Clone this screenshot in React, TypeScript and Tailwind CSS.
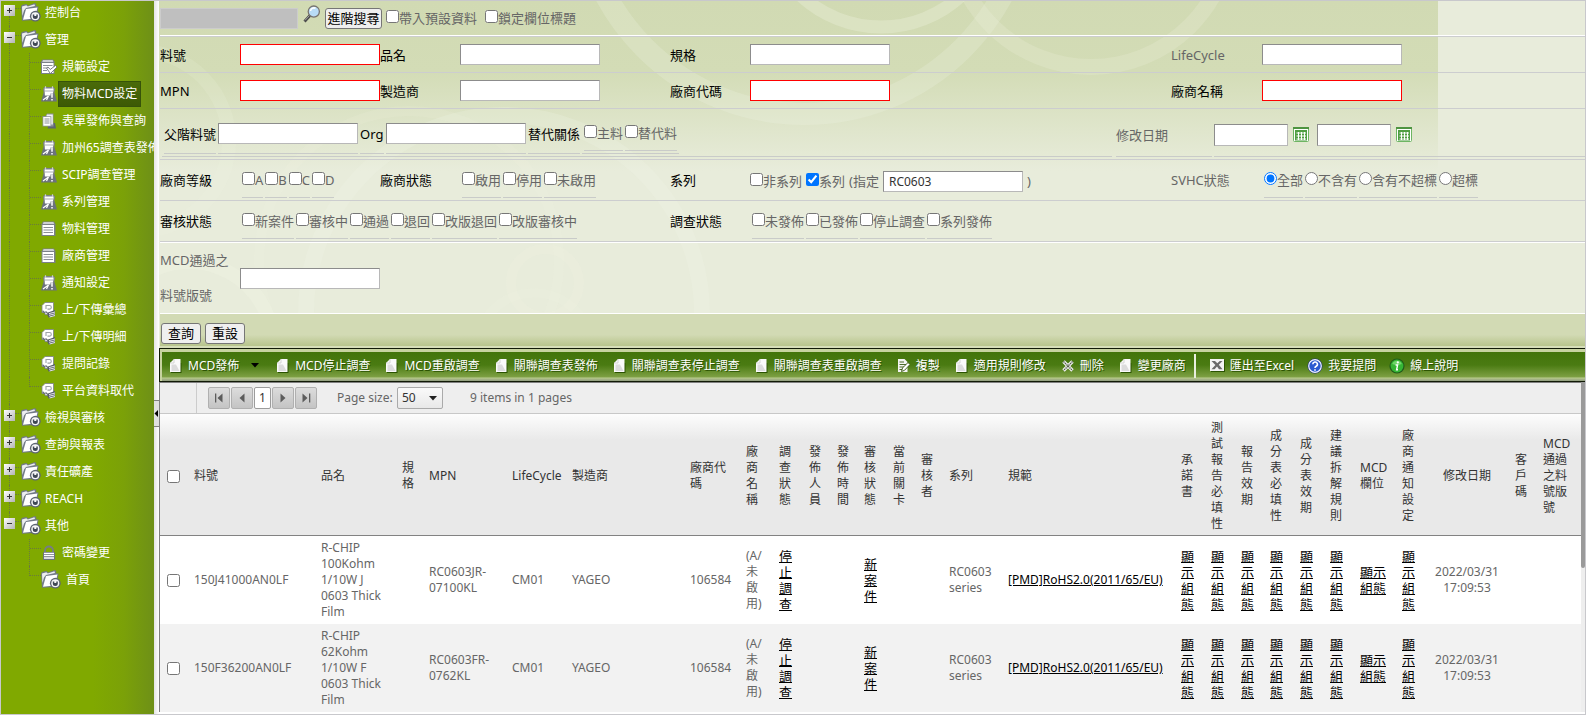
import type { ReactNode } from 'react';

/* ---------- icons ---------- */

function FolderIcon() {
    return (
        <svg width="20" height="19" viewBox="0 0 20 19" className="shrink-0">
            <path d="M0 3 L1.5 1.8 L5.5 1 L7 2.4 L14 0 L15.5 1.6 L15 3.2 L17.5 3.6 L17 7 L14 17 L1 17.8 Z" fill="#727a86" />
            <path d="M1 3.5 L5.3 2.2 L6.8 3.6 L13.4 1.2 L14 3 L5 5 L3 7.5 L1.4 13 Z" fill="#eceef0" />
            <path d="M5 6 L16.5 4.4 L13.5 15.5 L2 16.8 Z" fill="#ffffff" />
            <circle cx="14.3" cy="13.2" r="5.4" fill="#5d6572" />
            <circle cx="14.3" cy="13.2" r="4" fill="#f6f7f8" />
            <path d="M11.8 11.6 h1.5 v1.4 h2 v-1.4 h1.5 v1.8 a2.5 2.5 0 0 1 -5 0 z" fill="#3f4755" />
        </svg>
    );
}

function SheetIcon() {
    return (
        <svg width="16" height="16" viewBox="0 0 16 16" className="shrink-0">
            <path d="M0.5 3 L2 0.5 H13 L14.5 3 V15 H0.5 Z" fill="#7b8088" />
            <path d="M2.6 1.3 H12.4 L13.2 2.8 H1.8 Z" fill="#e8eaec" />
            <rect x="1.5" y="4" width="11.5" height="10" fill="#ffffff" />
            <path d="M2.5 6.5 H12 M2.5 9 H12 M2.5 11.5 H12" stroke="#8a8f96" />
        </svg>
    );
}

function CheckSheetIcon() {
    return (
        <svg width="16" height="16" viewBox="0 0 16 16" className="shrink-0">
            <path d="M0 2.5 L1.5 0.5 H12 L13.5 2.5 V15 H0 Z" fill="#7b8088" />
            <path d="M2 1.3 H11.6 L12.4 2.7 H1.2 Z" fill="#e8eaec" />
            <rect x="1" y="4" width="11.5" height="10" fill="#ffffff" />
            <path d="M2 6.5 H11.5 M2 9 H7 M2 11.5 H6" stroke="#8a8f96" />
            <path d="M5.5 9 L7 8 L9.2 10.5 L14.5 6.5 L16 8 L9.4 14.6 Z" fill="#ffffff" stroke="#6a7078" strokeWidth="0.9" />
        </svg>
    );
}

function AlertIcon() {
    return (
        <svg width="16" height="16" viewBox="0 0 16 16" className="shrink-0">
            <path d="M2.5 7 H13.5 L16 15.5 H0 Z" fill="#6c727d" />
            <path d="M2 2.5 L3.5 1 H12.5 L14 2.5 L13 9.5 H3 Z" fill="#7b8088" />
            <path d="M4.5 0.3 V2.5 M11.5 0.3 V2.5" stroke="#c9cccf" strokeWidth="1.2" />
            <path d="M3.5 2.5 H12.5 V4 L11.5 9.5 H4 Z" fill="#ffffff" />
            <path d="M4 5 H12" stroke="#a8adb3" />
            <path d="M2 14 L7.5 10 L5.5 14" stroke="#ffffff" strokeWidth="1.2" fill="none" />
            <path d="M11 7.5 V11.8 M11 13 V14.6" stroke="#6c727d" strokeWidth="3" />
            <path d="M11 7.5 V11.8 M11 13 V14.6" stroke="#ffffff" strokeWidth="1.5" />
        </svg>
    );
}

function StackIcon() {
    return (
        <svg width="16" height="16" viewBox="0 0 16 16" className="shrink-0">
            <path d="M8 10 L14 10 L15 15.5 H6.5 Z" fill="#5d6470" />
            <path d="M1.5 3 H4.5 L6 0.5 H12.5 V13.5 H1.5 Z" fill="#8c9198" />
            <path d="M2.3 4 H9.5 V12.7 H2.3 Z" fill="#ffffff" />
            <path d="M6 1.4 H11.8 V11.5 H10.3 V3.2 H5.4 Z" fill="#f2f3f4" />
            <path d="M3.5 6 H8.5 M3.5 8 H8.5 M3.5 10 H8.5" stroke="#8a8f96" />
        </svg>
    );
}

function TransferIcon() {
    return (
        <svg width="16" height="16" viewBox="0 0 16 16" className="shrink-0">
            <path d="M1 3.5 L4 0.5 H12.5 V12.5 H4 V10.5 H1 Z" fill="#ffffff" stroke="#7b8088" strokeWidth="0.8" />
            <path d="M5 7 V3.5 h3.5 a1.8 1.8 0 0 1 0 3.6 h-2" stroke="#9da2a8" strokeWidth="1.1" fill="none" />
            <path d="M1.5 8.8 L4 11 M4.5 9.5 L8 12.5" stroke="#6c727d" strokeWidth="1.4" fill="none" />
            <path d="M7 10.5 L14 8 V14 L8 15.8 L6.5 13.5 Z" fill="#565d68" />
            <path d="M8 11.6 L14 10 M8 13.3 L14 11.8 M8.5 15 L14 13.5" stroke="#f2f3f4" strokeWidth="0.9" />
        </svg>
    );
}

function LockIcon() {
    return (
        <svg width="16" height="16" viewBox="0 0 16 16" className="shrink-0">
            <path d="M4 8 V5.5 a4 4 0 0 1 8 0 V8" stroke="#767c86" strokeWidth="1.8" fill="none" />
            <rect x="2" y="7" width="12" height="8" rx="1" fill="#6c727d" />
            <path d="M3 8.5 H13 M3 10.7 H13 M3 13 H13" stroke="#ffffff" strokeWidth="1.3" />
        </svg>
    );
}

function DocIcon() {
    return (
        <svg width="12" height="14" viewBox="0 0 12 14" className="shrink-0">
            <path d="M1 4 H11.5 V14 H1 Z" fill="#2c5402" />
            <path d="M0 4 L4 0 H10.5 V13 H0 Z" fill="#fafafa" />
            <path d="M1.5 5.5 H6 L9.5 12 H1.5 Z" fill="#dcdcdc" />
            <path d="M4 0 V4 H0" stroke="#cccccc" strokeWidth="0.8" fill="none" />
        </svg>
    );
}

function CopyIcon() {
    return (
        <svg width="12" height="14" viewBox="0 0 12 14" className="shrink-0">
            <path d="M0 0 H6.5 L9.5 3 V13 H0 Z" fill="#f4f4f4" />
            <path d="M1.5 3 H6 M1.5 5.5 H8 M1.5 8 H6 M1.5 10.5 H4" stroke="#4c6a28" />
            <path d="M3.5 12.5 L4.5 9 L10 3.5 L12 5.5 L6.5 11.3 Z" fill="#ffffff" stroke="#35520f" strokeWidth="0.9" />
        </svg>
    );
}

function CrossIcon() {
    return (
        <svg width="12" height="12" viewBox="0 0 12 12" className="shrink-0">
            <path d="M1.5 1.5 L10.5 10.5 M10.5 1.5 L1.5 10.5" stroke="#eeeeee" strokeWidth="3.4" />
            <path d="M1.5 1.5 L10.5 10.5 M10.5 1.5 L1.5 10.5" stroke="#55604a" strokeWidth="1.3" strokeDasharray="1.4 0.7" />
        </svg>
    );
}

function ExcelIcon() {
    return (
        <svg width="15" height="13" viewBox="0 0 15 13" className="shrink-0">
            <rect x="1" y="1" width="14" height="12" fill="#2c5402" />
            <rect x="0" y="0" width="14" height="12" fill="#f4f4f4" />
            <path d="M1.5 2 H5 L7.3 4.3 L9.8 2 H12.5 L8.8 5.8 L12.5 10.2 H9 L7 7.6 L4.6 10.2 H1.5 L5.4 6 Z" fill="#6a6a6a" />
        </svg>
    );
}

function HelpIcon() {
    return (
        <svg width="16" height="16" viewBox="0 0 16 16" className="shrink-0">
            <circle cx="8" cy="8" r="7.5" fill="#1d2f73" />
            <circle cx="8" cy="8" r="6.3" fill="#2b5bd0" stroke="#f0f4ff" strokeWidth="1.2" />
            <path d="M5.8 6.3 a2.3 2.3 0 1 1 3.4 2 q-1.2 0.7 -1.2 1.6 M8 11.2 v1.5" stroke="#ffffff" strokeWidth="1.6" fill="none" />
        </svg>
    );
}

function InfoIcon() {
    return (
        <svg width="16" height="16" viewBox="0 0 16 16" className="shrink-0">
            <circle cx="8" cy="8" r="7.6" fill="#225c1a" />
            <circle cx="8" cy="8" r="6.4" fill="#35b535" />
            <path d="M3.2 6 a5.2 5.2 0 0 1 9.6 0 q-4.8 2 -9.6 0" fill="#6fd56b" />
            <path d="M6.6 7 H8.6 L7.6 11.8 H9" stroke="#ffffff" strokeWidth="1.4" fill="none" />
            <circle cx="8.8" cy="4.4" r="1.1" fill="#ffffff" />
        </svg>
    );
}

function SearchIcon() {
    return (
        <svg width="18" height="18" viewBox="0 0 18 18" className="shrink-0">
            <path d="M1.5 16.5 L7 10.5" stroke="#4a4a4a" strokeWidth="2.8" />
            <path d="M2 15.3 L6.5 10.5" stroke="#bdbdbd" strokeWidth="0.8" />
            <circle cx="10.8" cy="6.6" r="5.6" fill="#b9dcf6" stroke="#77736f" strokeWidth="1.3" />
            <path d="M7.5 6 a3.6 3.6 0 0 1 5 -2.8" stroke="#ffffff" strokeWidth="1.6" fill="none" />
        </svg>
    );
}

function CalendarIcon() {
    return (
        <svg width="16" height="16" viewBox="0 0 16 16" className="shrink-0">
            <rect x="0.5" y="0.5" width="15" height="14" rx="1" fill="#ffffff" stroke="#6db562" />
            <rect x="0" y="0" width="16" height="2" fill="#4e9441" />
            <rect x="2" y="3" width="12" height="10.5" fill="#4f9e42" />
            <path d="M3.5 6 H13 M3.5 9 H13 M3.5 12 H13 M5.5 5 V13 M8.5 5 V13 M11.5 5 V13" stroke="#ffffff" />
        </svg>
    );
}

function Swirls() {
    return (
        <svg width="1278" height="346" viewBox="0 0 1278 346" fill="none" stroke="#f3f6e6">
            <circle cx="722" cy="-92" r="118" strokeWidth="13" opacity="0.3" />
            <circle cx="645" cy="-112" r="225" strokeWidth="22" opacity="0.22" />
            <circle cx="932" cy="-74" r="140" strokeWidth="16" opacity="0.2" />
            <circle cx="345" cy="312" r="198" strokeWidth="16" opacity="0.22" />
            <circle cx="250" cy="260" r="150" strokeWidth="10" opacity="0.12" />
            <circle cx="386" cy="282" r="34" strokeWidth="10" opacity="0.18" />
            <circle cx="375" cy="350" r="58" strokeWidth="9" opacity="0.15" />
            <circle cx="-20" cy="140" r="90" strokeWidth="14" opacity="0.15" />
            <circle cx="30" cy="345" r="84" strokeWidth="14" opacity="0.3" />
        </svg>
    );
}

/* ---------- sidebar ---------- */

type TreeNode = { label: string; open?: boolean; children?: { label: string; icon: ReactNode; active?: boolean }[] };

const tree: TreeNode[] = [
    { label: '控制台' },
    {
        label: '管理',
        open: true,
        children: [
            { label: '規範設定', icon: <CheckSheetIcon /> },
            { label: '物料MCD設定', icon: <AlertIcon />, active: true },
            { label: '表單發佈與查詢', icon: <StackIcon /> },
            { label: '加州65調查表發佈', icon: <AlertIcon /> },
            { label: 'SCIP調查管理', icon: <AlertIcon /> },
            { label: '系列管理', icon: <AlertIcon /> },
            { label: '物料管理', icon: <SheetIcon /> },
            { label: '廠商管理', icon: <SheetIcon /> },
            { label: '通知設定', icon: <AlertIcon /> },
            { label: '上/下傳彙總', icon: <TransferIcon /> },
            { label: '上/下傳明細', icon: <TransferIcon /> },
            { label: '提問記錄', icon: <TransferIcon /> },
            { label: '平台資料取代', icon: <TransferIcon /> },
        ],
    },
    { label: '檢視與審核' },
    { label: '查詢與報表' },
    { label: '責任礦產' },
    { label: 'REACH' },
    {
        label: '其他',
        open: true,
        children: [
            { label: '密碼變更', icon: <LockIcon /> },
            { label: '首頁', icon: <FolderIcon /> },
        ],
    },
];

function Sidebar() {
    return (
        <nav className="w-[153px] shrink-0 overflow-hidden bg-[linear-gradient(to_right,#80a900_60%,#7ba108_80%,#6e9017_100%)] text-xs leading-4 text-white">
            <ul className="-mt-[2px]">
                {tree.map((node, i) => {
                    const last = i === tree.length - 1;
                    return (
                        <li key={node.label}>
                            <div className="flex h-[27px] items-center pl-[3px]">
                                <span className="flex h-full w-[11px] flex-col items-center">
                                    <span className={i === 0 ? 'h-[6px]' : 'h-[6px] border-l border-dotted border-[#6b7a3c]'} />
                                    <button
                                        aria-label={node.open ? '收合' : '展開'}
                                        className="flex size-[11px] items-center justify-center bg-linear-to-br from-white to-[#b4b4b4]"
                                    >
                                        <svg width="7" height="7" viewBox="0 0 7 7" stroke="#333333">
                                            <path d={node.open ? 'M1 3.5 H6' : 'M1 3.5 H6 M3.5 1 V6'} />
                                        </svg>
                                    </button>
                                    <span className={last ? 'flex-1' : 'flex-1 border-l border-dotted border-[#6b7a3c]'} />
                                </span>
                                <span className="mb-2 w-[6px] border-t border-dotted border-[#6b7a3c]" />
                                <FolderIcon />
                                <a href="#" className="ml-1 whitespace-nowrap">{node.label}</a>
                            </div>
                            {node.children && (
                                <ul>
                                    {node.children.map((child, j) => (
                                        <li key={child.label} className="flex h-[27px] items-center pl-2">
                                            <span
                                                className={
                                                    last ? 'h-full w-5 shrink-0' : 'h-full w-5 shrink-0 border-l border-dotted border-[#6b7a3c]'
                                                }
                                            />
                                            <span
                                                className={
                                                    j === node.children!.length - 1
                                                        ? 'h-[10px] self-start border-l border-dotted border-[#6b7a3c]'
                                                        : 'h-full border-l border-dotted border-[#6b7a3c]'
                                                }
                                            />
                                            <span className="mb-2 w-[11px] shrink-0 border-t border-dotted border-[#6b7a3c]" />
                                            {child.icon}
                                            <a
                                                href="#"
                                                className={
                                                    child.active
                                                        ? 'ml-px border border-[#37530a] bg-linear-to-b from-[#4a6a0a] to-[#3d5a05] px-[3px] py-1 whitespace-nowrap'
                                                        : 'ml-[5px] whitespace-nowrap'
                                                }
                                            >
                                                {child.label}
                                            </a>
                                        </li>
                                    ))}
                                </ul>
                            )}
                        </li>
                    );
                })}
            </ul>
        </nav>
    );
}

/* ---------- search form ---------- */

function TextBox({ label, required, value }: { label: string; required?: boolean; value?: string }) {
    return (
        <input
            type="text"
            aria-label={label}
            defaultValue={value}
            className={
                required
                    ? 'h-[21px] w-[140px] border border-[#ff0000] bg-white px-1'
                    : 'h-[21px] w-[140px] border border-t-[#8c8c8c] border-r-[#b8b8b8] border-b-[#b8b8b8] border-l-[#8c8c8c] bg-white px-[5px] text-xs text-[#333333]'
            }
        />
    );
}

function DateBox({ label }: { label: string }) {
    return (
        <>
            <input
                type="text"
                aria-label={label}
                className="h-[22px] w-[74px] border border-t-[#8c8c8c] border-r-[#b8b8b8] border-b-[#b8b8b8] border-l-[#8c8c8c] bg-white px-1"
            />
            <button type="button" aria-label={label + '日曆'} className="mr-2 ml-[5px]">
                <CalendarIcon />
            </button>
        </>
    );
}

function Options({ items, type = 'checkbox', name, checked }: { items: string[]; type?: 'checkbox' | 'radio'; name: string; checked?: string }) {
    return (
        <div className="mb-[2px] flex gap-[2px] self-end pl-[2px]">
            {items.map((item) => (
                <label key={item} className="flex h-[26px] items-start border-b border-[#c9cbc9] leading-4 whitespace-nowrap">
                    <input type={type} name={name} defaultChecked={item === checked} className="size-[13px] shrink-0" />
                    {item}
                </label>
            ))}
        </div>
    );
}

function FormRow({ children, tall }: { children: ReactNode; tall?: boolean }) {
    return (
        <div
            className={
                tall
                    ? 'grid h-[41px] grid-cols-[80px_140px_80px_210px_80px_1fr_91px_323px] items-center border-b border-[#cccdcf]'
                    : 'grid h-9 grid-cols-[80px_140px_80px_210px_80px_1fr_91px_323px] items-center border-b border-[#cccdcf]'
            }
        >
            {children}
        </div>
    );
}

function SearchForm() {
    return (
        <form className="relative bg-[#e8ecdb] pl-px text-[13px] leading-4 text-[#666666]">
            <div className="absolute inset-y-0 left-0 w-full max-w-[1279px] overflow-hidden bg-[linear-gradient(to_bottom,#d1dab3_0px,#d3dcb6_70px,#e8ecdb_170px)]">
                <Swirls />
            </div>
            <div className="relative">
                <div className="flex h-[35px] items-center border-b border-white">
                    <input type="text" disabled aria-label="範本" className="h-[21px] w-[138px] border border-[#cccccc] bg-[#bfbfbf]" />
                    <button type="button" aria-label="搜尋" className="mr-1 mb-2 ml-[5px]">
                        <SearchIcon />
                    </button>
                    <button type="button" className="h-[21px] w-[57px] rounded-[3px] border border-[#767676] bg-[#efefef] text-black">
                        進階搜尋
                    </button>
                    <label className="ml-1 flex items-center">
                        <input type="checkbox" className="mb-1 size-[13px]" />
                        帶入預設資料
                    </label>
                    <label className="ml-2 flex items-center">
                        <input type="checkbox" className="mb-1 size-[13px]" />
                        鎖定欄位標題
                    </label>
                </div>
                <div className="border-t border-[#cccdcf]">
                    <FormRow>
                        <span className="text-black">料號</span>
                        <TextBox label="料號" required />
                        <span className="text-black">品名</span>
                        <TextBox label="品名" />
                        <span className="text-black">規格</span>
                        <TextBox label="規格" />
                        <span>LifeCycle</span>
                        <TextBox label="LifeCycle" />
                    </FormRow>
                    <FormRow>
                        <span className="text-black">MPN</span>
                        <TextBox label="MPN" required />
                        <span className="text-black">製造商</span>
                        <TextBox label="製造商" />
                        <span className="text-black">廠商代碼</span>
                        <TextBox label="廠商代碼" required />
                        <span className="text-black">廠商名稱</span>
                        <TextBox label="廠商名稱" required />
                    </FormRow>
                </div>

                <div className="flex h-[51px] border-b border-[#cccdcf] pb-[2px]">
                    <div className="mr-1 ml-[2px] flex flex-1 gap-[2px] border-b border-[#c9cbc9] pb-[2px] pl-[2px]">
                        <span className="flex items-center border-b border-[#c9cbc9] pt-[6px] text-black">父階料號</span>
                        <span className="flex items-center border-b border-[#c9cbc9] pt-1">
                            <TextBox label="父階料號" />
                        </span>
                        <span className="flex w-6 items-center border-b border-[#c9cbc9] pt-[6px] text-black">Org</span>
                        <span className="flex items-center border-b border-[#c9cbc9] pt-1">
                            <TextBox label="Org" />
                        </span>
                        <span className="flex items-center border-b border-[#c9cbc9] pt-[6px] text-black">替代關係</span>
                        <div className="flex items-end border-b border-[#c9cbc9] pr-[2px]">
                            <Options name="substitute" items={['主料', '替代料']} />
                        </div>
                    </div>
                    <span className="mr-[2px] flex w-24 items-center border-b border-[#c9cbc9] pt-1">修改日期</span>
                    <div className="flex w-[371px] items-center border-b border-[#c9cbc9] pt-[5px]">
                        <DateBox label="修改日期起" />
                        <DateBox label="修改日期迄" />
                    </div>
                </div>

                <FormRow tall>
                    <span className="text-black">廠商等級</span>
                    <Options name="grade" items={['A', 'B', 'C', 'D']} />
                    <span className="text-black">廠商狀態</span>
                    <Options name="vendor" items={['啟用', '停用', '未啟用']} />
                    <span className="text-black">系列</span>
                    <div className="flex items-center pt-[2px] whitespace-nowrap">
                        <label className="mr-1 flex items-center">
                            <input type="checkbox" className="mb-1 size-[13px]" />
                            非系列
                        </label>
                        <label className="mr-1 flex items-center">
                            <input type="checkbox" defaultChecked className="mb-1 size-[13px]" />
                            系列
                        </label>
                        <span className="mr-1">(指定</span>
                        <TextBox label="指定系列" value="RC0603" />
                        <span className="ml-1">)</span>
                    </div>
                    <span>SVHC狀態</span>
                    <Options name="svhc" type="radio" items={['全部', '不含有', '含有不超標', '超標']} checked="全部" />
                </FormRow>
                <FormRow tall>
                    <span className="text-black">審核狀態</span>
                    <div className="col-span-3 flex self-stretch">
                        <Options name="review" items={['新案件', '審核中', '通過', '退回', '改版退回', '改版審核中']} />
                    </div>
                    <span className="text-black">調查狀態</span>
                    <Options name="survey" items={['未發佈', '已發佈', '停止調查', '系列發佈']} />
                </FormRow>

                <div className="flex items-center border-y border-white">
                    <span className="w-20 leading-[35px]">
                        MCD通過之
                        <br />
                        料號版號
                    </span>
                    <TextBox label="MCD通過之料號版號" />
                </div>

                <div className="flex h-[34px] items-center gap-1 border-b-2 border-[#d5ddb8] bg-[linear-gradient(to_bottom,#d2dab4_65%,#b7c48c)] pt-[6px] pl-px">
                    <button type="button" className="h-[21px] w-10 rounded-[3px] border border-[#767676] bg-[#efefef] text-black">
                        查詢
                    </button>
                    <button type="button" className="h-[21px] w-10 rounded-[3px] border border-[#767676] bg-[#efefef] text-black">
                        重設
                    </button>
                </div>
            </div>
        </form>
    );
}

/* ---------- toolbar ---------- */

function Tool({ icon, label, caret, tight }: { icon: ReactNode; label: string; caret?: boolean; tight?: boolean }) {
    return (
        <button
            className={
                tight
                    ? 'mr-[13px] flex items-center gap-[5px] whitespace-nowrap text-shadow-[1px_1px_0_#2c5402]'
                    : 'mr-4 flex items-center gap-[6px] whitespace-nowrap text-shadow-[1px_1px_0_#2c5402]'
            }
        >
            {icon}
            {label}
            {caret && (
                <svg width="8" height="5" viewBox="0 0 8 5" className="mr-[2px] ml-[6px] text-black">
                    <path d="M0 0 H8 L4 4.5 Z" fill="currentColor" />
                </svg>
            )}
        </button>
    );
}

function Toolbar() {
    return (
        <div className="border border-r-0 border-[#111a06] bg-[#c7d3a0] pt-[3px] pl-[2px]">
            <div className="flex h-[29px] items-center overflow-hidden bg-[linear-gradient(to_bottom,#42740a_0%,#4a7b12_45%,#7c9f42_85%,#b5c88a_90%,#8f9a80_100%)] pb-[2px] pl-2 text-xs leading-4 text-white">
                <Tool icon={<DocIcon />} label="MCD發佈" caret />
                <Tool icon={<DocIcon />} label="MCD停止調查" />
                <Tool icon={<DocIcon />} label="MCD重啟調查" />
                <Tool icon={<DocIcon />} label="關聯調查表發佈" />
                <Tool icon={<DocIcon />} label="關聯調查表停止調查" />
                <Tool icon={<DocIcon />} label="關聯調查表重啟調查" />
                <Tool icon={<CopyIcon />} label="複製" />
                <Tool icon={<DocIcon />} label="適用規則修改" />
                <Tool icon={<CrossIcon />} label="刪除" />
                <Tool icon={<DocIcon />} label="變更廠商" />
                <span className="mr-[14px] -ml-2 h-6 w-[2px] shrink-0 bg-[#e9eede]" />
                <Tool icon={<ExcelIcon />} label="匯出至Excel" tight />
                <Tool icon={<HelpIcon />} label="我要提問" tight />
                <Tool icon={<InfoIcon />} label="線上說明" tight />
            </div>
        </div>
    );
}

/* ---------- pager ---------- */

function PageButton({ label, path }: { label: string; path: string }) {
    return (
        <button
            aria-label={label}
            className="flex h-[22px] w-[22px] items-center justify-center rounded-[2px] border border-[#b0b0b0] bg-linear-to-b from-[#dcdcdc] to-[#c4c4c4]"
        >
            <svg width="10" height="10" viewBox="0 0 10 10" fill="#5c5c5c">
                <path d={path} />
            </svg>
        </button>
    );
}

function Pager() {
    return (
        <div className="flex h-8 border-t border-b border-t-[#808080] border-b-[#c8c8c8] bg-[#eeeeee] text-xs leading-4 text-[#666666]">
            <span className="w-[37px] border-r border-[#cccccc]" />
            <div className="flex items-center gap-px pl-[11px]">
                <PageButton label="第一頁" path="M1 0.5 H2.3 V9.5 H1 Z M8.5 0.5 V9.5 L3.5 5 Z" />
                <PageButton label="上一頁" path="M7.5 0.5 V9.5 L2.5 5 Z" />
                <button className="h-[22px] w-[17px] rounded-[2px] border border-[#9c9c9c] bg-white text-[#333333]">1</button>
                <PageButton label="下一頁" path="M2.5 0.5 V9.5 L7.5 5 Z" />
                <PageButton label="最後一頁" path="M8 0.5 H9.3 V9.5 H8 Z M1.5 0.5 V9.5 L6.5 5 Z" />
            </div>
            <label className="ml-5 flex items-center gap-1">
                <span className="w-[56px] whitespace-nowrap">Page size:</span>
                <span className="grid items-center">
                    <select
                        defaultValue="50"
                        className="col-start-1 row-start-1 h-[22px] w-[46px] appearance-none rounded-[2px] border border-[#aaaaaa] bg-linear-to-b from-[#fafafa] to-[#e8e8e8] pl-1 text-[#333333]"
                    >
                        <option>10</option>
                        <option>20</option>
                        <option>50</option>
                    </select>
                    <svg width="8" height="5" viewBox="0 0 8 5" className="pointer-events-none col-start-1 row-start-1 mr-[6px] justify-self-end">
                        <path d="M0 0 H8 L4 4.5 Z" fill="#222222" />
                    </svg>
                </span>
            </label>
            <span className="ml-[27px] flex items-center">9 items in 1 pages</span>
        </div>
    );
}

/* ---------- data grid ---------- */

const columns = [
    { label: '料號', width: 127 },
    { label: '品名', width: 81 },
    { label: '規格', width: 27 },
    { label: 'MPN', width: 83 },
    { label: 'LifeCycle', width: 60 },
    { label: '製造商', width: 118 },
    { label: '廠商代碼', width: 56 },
    { label: '廠商名稱', width: 33, narrow: true },
    { label: '調查狀態', width: 30, narrow: true },
    { label: '發佈人員', width: 28 },
    { label: '發佈時間', width: 27 },
    { label: '審核狀態', width: 29, narrow: true },
    { label: '當前關卡', width: 28 },
    { label: '審核者', width: 28 },
    { label: '系列', width: 59 },
    { label: '規範', width: 173 },
    { label: '承諾書', width: 30 },
    { label: '測試報告必填性', width: 30 },
    { label: '報告效期', width: 29 },
    { label: '成分表必填性', width: 30 },
    { label: '成分表效期', width: 30 },
    { label: '建議拆解規則', width: 30 },
    { label: 'MCD欄位', width: 42 },
    { label: '廠商通知設定', width: 31, narrow: true },
    { label: '修改日期', width: 82, center: true },
    { label: '客戶碼', width: 28 },
    { label: 'MCD通過之料號版號', width: 45 },
];

const rows = [
    { part: '150J41000AN0LF', name: 'R-CHIP 100Kohm 1/10W J 0603 Thick Film', mpn: 'RC0603JR-07100KL' },
    { part: '150F36200AN0LF', name: 'R-CHIP 62Kohm 1/10W F 0603 Thick Film', mpn: 'RC0603FR-0762KL' },
];

function ShowLink() {
    return (
        <a href="#" className="block text-[13px] break-all text-black underline">
            顯示組態
        </a>
    );
}

function NarrowLink({ children }: { children: string }) {
    return (
        <a href="#" className="block w-4 text-[13px] break-all text-black underline">
            {children}
        </a>
    );
}

function DataGrid() {
    return (
        <table className="w-full table-fixed text-left text-xs leading-4 text-[#666666] [&_td]:px-[7px] [&_td]:py-1 [&_th]:px-[7px] [&_th]:pt-[6px] [&_th]:pb-[3px] [&_th]:font-normal">
            <colgroup>
                <col style={{ width: 27 }} />
                {columns.map((c) => (
                    <col key={c.label} style={{ width: c.width }} />
                ))}
            </colgroup>
            <thead>
                <tr className="border-b border-[#828282] bg-[linear-gradient(to_bottom,#fdfdfd,#e9e9e9_26px)] text-[#333333]">
                    <th>
                        <input type="checkbox" aria-label="全選" className="block size-[13px]" />
                    </th>
                    {columns.map((c) => (
                        <th key={c.label} className={c.center ? 'text-center' : ''}>
                            {c.narrow ? <span className="block w-[14px]">{c.label}</span> : c.label}
                        </th>
                    ))}
                </tr>
            </thead>
            <tbody>
                {rows.map((r) => (
                    <tr key={r.part} className="h-[88px] bg-white even:bg-[#f2f2f2]">
                        <td>
                            <input type="checkbox" aria-label={r.part} className="block size-[13px]" />
                        </td>
                        <td>{r.part}</td>
                        <td>{r.name}</td>
                        <td />
                        <td>{r.mpn}</td>
                        <td>CM01</td>
                        <td>YAGEO</td>
                        <td>106584</td>
                        <td>
                            (A/
                            <br />未<br />啟<br />
                            <span className="whitespace-nowrap">用)</span>
                        </td>
                        <td>
                            <NarrowLink>停止調查</NarrowLink>
                        </td>
                        <td />
                        <td />
                        <td>
                            <NarrowLink>新案件</NarrowLink>
                        </td>
                        <td />
                        <td />
                        <td>RC0603 series</td>
                        <td>
                            <a href="#" className="whitespace-nowrap text-black underline">
                                [PMD]RoHS2.0(2011/65/EU)
                            </a>
                        </td>
                        <td><ShowLink /></td>
                        <td><ShowLink /></td>
                        <td><ShowLink /></td>
                        <td><ShowLink /></td>
                        <td><ShowLink /></td>
                        <td><ShowLink /></td>
                        <td><ShowLink /></td>
                        <td><ShowLink /></td>
                        <td className="text-center">2022/03/31 17:09:53</td>
                        <td />
                        <td />
                    </tr>
                ))}
            </tbody>
        </table>
    );
}

export default function App() {
    return (
        <div className="flex min-h-screen border border-[#c8c8cc] bg-white font-['Noto_Sans','Noto_Sans_CJK_TC',sans-serif]">
            <Sidebar />
            <div className="flex w-[5px] shrink-0 flex-col bg-linear-to-r from-[#e4e4e4] to-white">
                <button
                    aria-label="收合選單"
                    className="mt-[399px] flex h-[27px] w-[5px] items-center border-y border-[#808080] bg-[#e0e0e0]"
                >
                    <svg width="4" height="7" viewBox="0 0 4 7">
                        <path d="M4 0 V7 L0.5 3.5 Z" fill="#000000" />
                    </svg>
                </button>
            </div>
            <main className="flex min-w-0 flex-1 flex-col">
                <SearchForm />
                <Toolbar />
                <div className="flex">
                    <div className="min-w-0 flex-1 border-l border-[#808080]">
                        <Pager />
                        <DataGrid />
                    </div>
                    <div className="w-1 bg-[#eeeeee]">
                        <div className="h-[186px] rounded-b-full bg-[#9a9a9a]" />
                    </div>
                </div>
            </main>
        </div>
    );
}
